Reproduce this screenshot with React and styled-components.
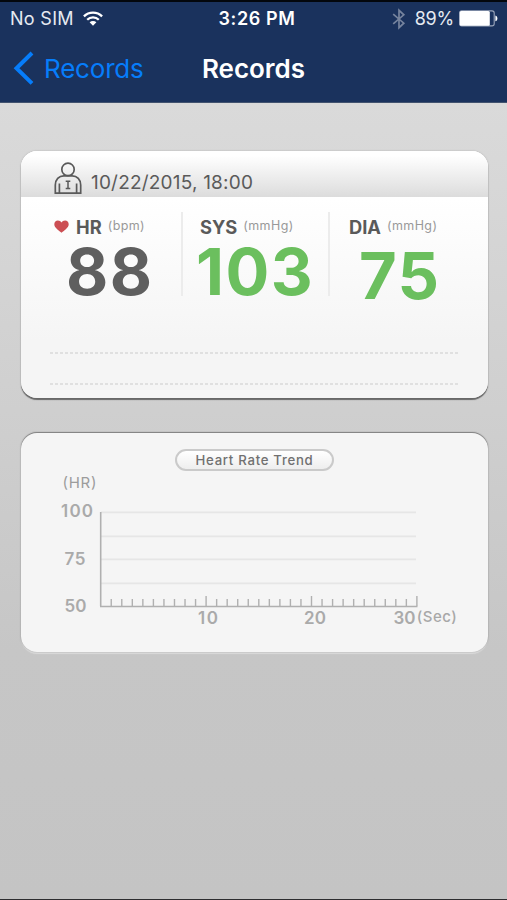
import React from "react";
import styled, { createGlobalStyle } from "styled-components";

const readings = [
  { label: "HR", unit: "(bpm)", value: "88", color: "#5f5f5f", heart: true, start: 33, valueStart: 45 },
  { label: "SYS", unit: "(mmHg)", value: "103", color: "#6bbf5e", start: 17, valueStart: 13 },
  { label: "DIA", unit: "(mmHg)", value: "75", color: "#6bbf5e", start: 19, valueStart: 29, drop: 4 },
];

const gridLines = [512, 536, 559, 583];
const ticks = Array.from({ length: 30 }, (_, i) => i + 1);

const Wifi = () => (
  <svg width="20" height="16" viewBox="0 0 20 16">
    <g fill="none" stroke="#fff" strokeWidth="2.3">
      <path d="M.9 5.4a13 13 0 0 1 18.2 0" />
      <path d="M4.2 8.8a8.3 8.3 0 0 1 11.6 0" />
    </g>
    <path d="M6.6 11.3a4.9 4.9 0 0 1 6.8 0L10 14.8z" fill="#fff" />
  </svg>
);

const Bluetooth = () => (
  <svg width="14" height="22" viewBox="0 0 14 22">
    <path d="M1.2 6.2l10.6 9-4.8 4.5V2.3l4.8 4.5-10.6 9" fill="none" stroke="#76849e" strokeWidth="1.7" />
  </svg>
);

const Battery = () => (
  <svg width="39" height="17" viewBox="0 0 39 17">
    <rect x=".6" y=".9" width="34.6" height="15" rx="2.2" fill="none" stroke="#9aa5ba" strokeWidth="1.1" />
    <rect x=".8" y="1.1" width="30" height="14.6" rx="1.5" fill="#fff" />
    <path d="M36.4 5.5c1.3.4 2 1.5 2 2.9s-.7 2.5-2 2.9z" fill="#fff" />
  </svg>
);

const Person = () => (
  <svg width="28" height="33" viewBox="0 0 28 33">
    <g fill="none" stroke="#5a5a5a" strokeWidth="1.7">
      <circle cx="14" cy="7.4" r="6.2" />
      <path d="M1.3 31.2V23c0-5.5 3.6-9.2 8.500-9.200h8.400c4.900 0 8.500 3.700 8.500 9.200v8.200z" />
      <path d="M5.400 31v-9.500M9.300 31M22.600 31v-9.500" />
      <path d="M11.700 19.300h4.600M14 19.300v7.200M11.700 26.500h4.600" strokeWidth="1.500" />
    </g>
  </svg>
);

const Heart = () => (
  <svg width="15" height="13" viewBox="0 0 15 13">
    <path
      d="M7.500 12.700C5.500 10.800.3 8 .3 4.200.3 1.900 1.900.5 3.900.5c1.600 0 2.900.8 3.600 2.100C8.200 1.300 9.500.5 11.100.5c2 0 3.600 1.400 3.600 3.700 0 3.800-5.200 6.600-7.200 8.500z"
      fill="#cc4f54"
    />
  </svg>
);

const TrendChart = () => (
  <Chart viewBox="50 470 420 165">
    <text x="62.500" y="487.700" fontSize="15" fill="#9c9c9c" textLength="34">(HR)</text>
    {gridLines.map((y) => (
      <rect key={y} x="101" y={y - 0.5} width="315" height="1.8" fill="#e6e6e6" />
    ))}
    <g stroke="#b0b0b0" fill="none">
      <path d="M100.700 512v94.300" strokeWidth="1.600" />
      <path d="M100 606.500h317.500" strokeWidth="1.700" />
      {ticks.map((t) => (
        <path key={t} d={`M${100.7 + t * 10.54} ${t % 10 ? 599 : 596}V606`} strokeWidth="1.400" />
      ))}
    </g>
    <g fontSize="17" fontWeight="600" fill="#aaa">
      <text x="61" y="517.200" textLength="32">100</text>
      <text x="64.500" y="564.600" textLength="21">75</text>
      <text x="64.500" y="611.500" textLength="22">50</text>
      <text x="198" y="624" textLength="20">10</text>
      <text x="304" y="624" textLength="22">20</text>
      <text x="393.500" y="624" textLength="22">30</text>
    </g>
    <text x="416.800" y="622.300" fontSize="15" fontWeight="500" fill="#a8a8a8" textLength="40">(Sec)</text>
  </Chart>
);

const App = () => {
  return (
    <>
      <GlobalStyle />
      <Screen>
        <Header>
          <StatusBar>
            <Carrier>
              <span>No SIM</span>
              <Wifi />
            </Carrier>
            <Clock>3:26 PM</Clock>
            <Power>
              <Bluetooth />
              <span>89%</span>
              <Battery />
            </Power>
          </StatusBar>
          <NavBar>
            <Back>
              <svg width="21" height="34" viewBox="0 0 21 34">
                <path d="M19 2L3.500 17.200 19 32.400" fill="none" stroke="#067dfb" strokeWidth="4" />
              </svg>
              <span>Records</span>
            </Back>
            <Title>Records</Title>
            <span />
          </NavBar>
        </Header>
        <Content>
          <RecordCard>
            <RecordHead>
              <Person />
              <DateText>10/22/2015, 18:00</DateText>
            </RecordHead>
            <Readings>
              {readings.map((item) => (
                <Reading key={item.label}>
                  <Label $start={item.start}>
                    {item.heart && <Heart />}
                    <h4>{item.label}</h4>
                    <small>{item.unit}</small>
                  </Label>
                  <Value $start={item.valueStart} $color={item.color} $drop={item.drop}>
                    {item.value}
                  </Value>
                </Reading>
              ))}
            </Readings>
            <Notes>
              <DottedLine />
              <DottedLine />
            </Notes>
          </RecordCard>
          <TrendCard>
            <Pill>Heart Rate Trend</Pill>
            <TrendChart />
          </TrendCard>
        </Content>
      </Screen>
    </>
  );
};

export default App;

const GlobalStyle = createGlobalStyle`
  * {
    box-sizing: border-box;
  }
  body {
    margin: 0;
    font-family: "Inter", "Liberation Sans", sans-serif;
    overflow: hidden;
  }
  svg {
    display: block;
    flex-shrink: 0;
  }
`;

const Screen = styled.div`
  width: 507px;
  height: 900px;
  display: flex;
  flex-direction: column;
  background: linear-gradient(#dadada 102px, #cfcfcf 410px, #c6c6c6 650px, #c4c4c4);
  border-bottom: 1px solid #2e2e30;
`;

const Header = styled.header`
  height: 103px;
  background: #1a325d;
  border-top: 2px solid #03070d;
  border-bottom: 1px solid #42536f;
  color: #fff;
`;

const StatusBar = styled.div`
  height: 33px;
  display: grid;
  grid-template-columns: 1fr auto 1fr;
  align-items: center;
  padding: 0 9px 0 10px;
  font-size: 18px;
  line-height: 33px;
`;

const Carrier = styled.div`
  display: flex;
  align-items: center;
  gap: 9px;
  color: #e6eaf1;
  letter-spacing: 0.3px;
`;

const Clock = styled.div`
  font-weight: 600;
  letter-spacing: 0.6px;
  margin-right: -6px;
`;

const Power = styled.div`
  display: flex;
  align-items: center;
  justify-content: flex-end;
  color: #e6eaf1;
  span {
    margin: 0 5px 0 9px;
    letter-spacing: -0.2px;
  }
`;

const NavBar = styled.div`
  height: 66px;
  display: grid;
  grid-template-columns: 1fr auto 1fr;
  align-items: center;
  padding: 0 13px;
  font-size: 26px;
`;

const Back = styled.div`
  display: flex;
  align-items: center;
  gap: 10px;
  color: #067dfb;
  letter-spacing: -0.2px;
`;

const Title = styled.div`
  font-weight: 600;
`;

const Content = styled.main`
  display: flex;
  flex-direction: column;
  gap: 35px;
  padding: 48px 19px 0 21px;
`;

const RecordCard = styled.section`
  height: 247px;
  border-radius: 16px;
  overflow: hidden;
  background: linear-gradient(#fff 47px, #f5f5f5 190px);
  box-shadow: 0 2px 1px #686868, 0 0 2px #aaa;
`;

const RecordHead = styled.div`
  height: 46px;
  display: flex;
  align-items: flex-start;
  gap: 9px;
  padding: 11px 0 0 33px;
  background: linear-gradient(#fff 10%, #dcdcdc);
`;

const DateText = styled.div`
  margin-top: 9px;
  font-size: 19px;
  line-height: 24px;
  letter-spacing: 0.2px;
  color: #5a5a5a;
`;

const Readings = styled.div`
  display: grid;
  grid-template-columns: 162px 147px 1fr;
  height: 100px;
  padding-top: 15px;
`;

const Reading = styled.div`
  height: 84px;
  border-right: 2px solid #ececec;
  white-space: nowrap;
  &:last-child {
    border-right: none;
  }
`;

const Label = styled.div`
  display: flex;
  align-items: center;
  height: 29px;
  padding-left: ${({ $start }) => $start}px;
  color: #5a5a5a;
  h4 {
    margin: 0;
    font-size: 18.3px;
    font-weight: 700;
  }
  svg + h4 {
    margin-left: 7px;
  }
  small {
    margin: -2px 0 0 6px;
    font-size: 12.5px;
    letter-spacing: 0.4px;
    color: #999;
  }
`;

const Value = styled.div`
  padding-left: ${({ $start }) => $start}px;
  margin-top: ${({ $drop = 0 }) => $drop}px;
  font-size: 65px;
  line-height: 61px;
  font-weight: 650;
  letter-spacing: 1.4px;
  color: ${({ $color }) => $color};
`;

const Notes = styled.div`
  display: flex;
  flex-direction: column;
  gap: 29px;
  padding: 55px 30px 0 29px;
`;

const DottedLine = styled.div`
  height: 2px;
  background: repeating-linear-gradient(90deg, #e0e0e0 0 3px, transparent 3px 5px);
`;

const TrendCard = styled.section`
  height: 219px;
  display: flex;
  flex-direction: column;
  align-items: center;
  padding-top: 16px;
  border-radius: 16px;
  background: #f5f5f5;
  box-shadow: 0 -1px 1px #808080, 0 0 2px #999, 0 2px 1px #dedede;
`;

const Pill = styled.div`
  width: 159px;
  height: 22px;
  border: 2px solid #cacaca;
  border-radius: 11px;
  background: linear-gradient(#fff, #eee);
  color: #707070;
  font-size: 13.2px;
  font-weight: 500;
  line-height: 19px;
  letter-spacing: 0.7px;
  text-align: center;
  white-space: nowrap;
`;

const Chart = styled.svg`
  width: 420px;
  height: 165px;
  margin: -1px 0 0 11px;
`;
